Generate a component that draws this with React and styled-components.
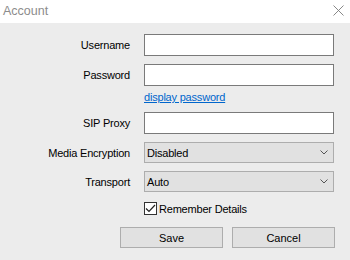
import styled, { createGlobalStyle } from 'styled-components';

const Global = createGlobalStyle`
    html, body {
        margin: 0;
        padding: 0;
        background: #ececec;
    }
    body {
        font-family: "Liberation Sans", Arial, sans-serif;
        font-size: 11px;
        letter-spacing: -0.2px;
        color: #000;
    }
`

const Window = styled.div`
    width: 350px;
    height: 260px;
    background: #ececec;
    display: flex;
    flex-direction: column;
    overflow: hidden;
`

const TitleBar = styled.div`
    height: 23px;
    background: #fff;
    display: flex;
    align-items: center;
    justify-content: space-between;
    padding: 0 6px 2px 3px;
    box-sizing: border-box;
`

const TitleText = styled.span`
    font-size: 12.5px;
    letter-spacing: 0;
    color: #8c8c8c;
`

const Close = styled.svg`
    width: 11px;
    height: 11px;
`

const Form = styled.div`
    display: flex;
    flex-direction: column;
`

const Row = styled.div`
    display: grid;
    grid-template-columns: 130px 190px;
    column-gap: 14px;
    align-items: center;
    margin-top: ${({ $top }) => $top}px;
    height: ${({ $h }) => $h}px;
`

const Label = styled.label`
    text-align: right;
    white-space: nowrap;
`

const Input = styled.input`
    box-sizing: border-box;
    width: 190px;
    height: 22px;
    border: 1px solid #7a7a7a;
    background: #fff;
    margin: 0;
    padding: 0 3px;
    font: inherit;
    outline: none;
`

const Link = styled.a`
    grid-column: 2;
    color: #0066cc;
    text-decoration: underline;
    cursor: pointer;
`

const Select = styled.div`
    box-sizing: border-box;
    width: 190px;
    height: 21px;
    border: 1px solid #adadad;
    background: #e1e1e1;
    display: flex;
    align-items: center;
    justify-content: space-between;
    padding: 0 5px 0 2px;
`

const Check = styled.div`
    grid-column: 2;
    display: flex;
    align-items: center;
    gap: 2px;
`

const Box = styled.div`
    box-sizing: border-box;
    width: 13px;
    height: 13px;
    border: 1px solid #333;
    background: #fff;
    display: flex;
    align-items: center;
    justify-content: center;
`

const Buttons = styled.div`
    display: flex;
    gap: 9px;
    padding-left: 120px;
    margin-top: 12px;
`

const Button = styled.button`
    box-sizing: border-box;
    width: 103px;
    height: 21px;
    border: 1px solid #adadad;
    background: #e1e1e1;
    font: inherit;
    color: #000;
    padding: 0;
    margin: 0;
`

const Chevron = () => (
    <svg width="8" height="5" viewBox="0 0 8 5">
        <path d="M0.5 0.5 L4 4 L7.5 0.5" fill="none" stroke="#555" strokeWidth="1" />
    </svg>
)

const Dropdown = ({ value }) => (
    <Select>
        <span>{value}</span>
        <Chevron />
    </Select>
)

const App = () => {
    return (
        <Window>
            <Global />
            <TitleBar>
                <TitleText>Account</TitleText>
                <Close viewBox="0 0 11 11">
                    <path d="M0.5 0.5 L10.5 10.5 M10.5 0.5 L0.5 10.5" stroke="#7a7a7a" strokeWidth="0.9" fill="none" />
                </Close>
            </TitleBar>
            <Form>
                <Row $top={11} $h={22}>
                    <Label>Username</Label>
                    <Input />
                </Row>
                <Row $top={8} $h={22}>
                    <Label>Password</Label>
                    <Input type="password" />
                </Row>
                <Row $top={4} $h={14}>
                    <Link>display password</Link>
                </Row>
                <Row $top={8} $h={22}>
                    <Label>SIP Proxy</Label>
                    <Input />
                </Row>
                <Row $top={8} $h={21}>
                    <Label>Media Encryption</Label>
                    <Dropdown value="Disabled" />
                </Row>
                <Row $top={8} $h={21}>
                    <Label>Transport</Label>
                    <Dropdown value="Auto" />
                </Row>
                <Row $top={10} $h={13}>
                    <Check>
                        <Box>
                            <svg width="11" height="9" viewBox="0 0 11 9">
                                <path d="M1 4.5 L4 7.5 L10 1" fill="none" stroke="#222" strokeWidth="1.2" />
                            </svg>
                        </Box>
                        <span>Remember Details</span>
                    </Check>
                </Row>
                <Buttons>
                    <Button>Save</Button>
                    <Button>Cancel</Button>
                </Buttons>
            </Form>
        </Window>
    )
}

export default App
